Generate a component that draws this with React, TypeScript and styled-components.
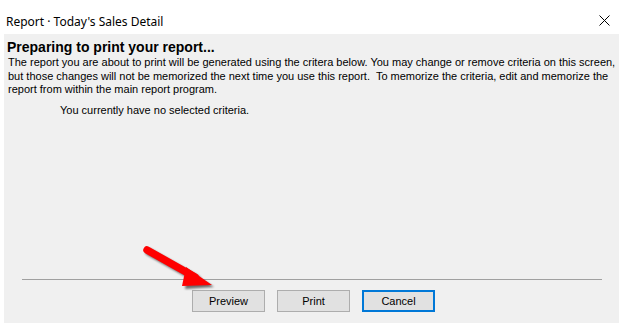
import styled, { createGlobalStyle } from "styled-components";

const Global = createGlobalStyle`
  html, body { margin: 0; padding: 0; background: #ffffff; }
  body { width: 619px; height: 323px; overflow: hidden; }
`;

const Window = styled.div`
  position: relative;
  width: 619px;
  height: 323px;
  background: #ffffff;
  display: flex;
  flex-direction: column;
  font-family: "Liberation Sans", sans-serif;
`;

const TitleBar = styled.div`
  height: 34px;
  display: flex;
  align-items: center;
  justify-content: space-between;
  padding: 0 8px 0 6px;
  box-sizing: border-box;
`;

const Title = styled.span`
  font-family: "Noto Sans", "Open Sans", sans-serif;
  font-size: 12px;
  color: #000;
  margin-top: 8px;
`;

const Close = styled.svg`
  margin-top: 6px;
  margin-right: 1px;
`;

const Body = styled.div`
  flex: 1;
  margin-left: 4px;
  background: #f0f0f0;
  display: flex;
  flex-direction: column;
  padding: 5px 0 0 3px;
`;

const Heading = styled.h1`
  margin: 0;
  font-weight: bold;
  font-size: 14px;
  line-height: 17px;
  color: #000;
`;

const Para = styled.p`
  margin: 0 0 0 1px;
  font-size: 11px;
  line-height: 13.5px;
  color: #000;
  white-space: nowrap;
`;

const Criteria = styled.p`
  margin: 7px 0 0 53px;
  font-size: 11px;
  line-height: 13px;
  color: #000;
`;

const Spacer = styled.div`
  flex: 1;
`;

const Separator = styled.div`
  height: 1px;
  background: #a0a0a0;
  margin: 0 17px 0 15px;
`;

const ButtonRow = styled.div`
  display: flex;
  justify-content: center;
  gap: 12px;
  padding: 10px 0 11px;
  margin-left: 1px;
`;

const Button = styled.button<{ $focused?: boolean }>`
  width: 73px;
  height: 22px;
  box-sizing: border-box;
  background: #e1e1e1;
  border: ${(p) => (p.$focused ? "2px solid #0078d7" : "1px solid #adadad")};
  font-family: "Liberation Sans", sans-serif;
  font-size: 11px;
  color: #000;
  padding: 0;
`;

const Arrow = styled.svg`
  position: absolute;
  left: 137px;
  top: 240px;
`;

export default function App() {
  return (
    <>
      <Global />
      <Window>
        <TitleBar>
          <Title>Report · Today's Sales Detail</Title>
          <Close width="11" height="11" viewBox="0 0 11 11">
            <path d="M0.5 0.5 L10.5 10.5 M10.5 0.5 L0.5 10.5" stroke="#000" strokeWidth="1" />
          </Close>
        </TitleBar>
        <Body>
          <Heading>Preparing to print your report...</Heading>
          <Para>
            The report you are about to print will be generated using the critera below. You may change or remove criteria on this screen,
            <br />
            but those changes will not be memorized the next time you use this report.&nbsp; To memorize the criteria, edit and memorize the
            <br />
            report from within the main report program.
          </Para>
          <Criteria>You currently have no selected criteria.</Criteria>
          <Spacer />
          <Separator />
          <ButtonRow>
            <Button>Preview</Button>
            <Button>Print</Button>
            <Button $focused>Cancel</Button>
          </ButtonRow>
        </Body>
        <Arrow width="80" height="55" viewBox="0 0 80 55">
          <defs>
            <filter id="sh" x="-20%" y="-20%" width="140%" height="140%">
              <feGaussianBlur stdDeviation="1.2" />
            </filter>
          </defs>
          <g transform="translate(2,2)" filter="url(#sh)" opacity="0.55">
            <path d="M10 10 L58 37" stroke="#000" strokeWidth="7.5" strokeLinecap="round" />
            <path d="M49 28 L75 45 L46 47 Z" fill="#000" />
          </g>
          <path d="M10 10 L58 37" stroke="#ff0000" strokeWidth="7.5" strokeLinecap="round" />
          <path d="M49 27 L75 45 L45 46 Z" fill="#ff0000" />
        </Arrow>
      </Window>
    </>
  );
}
